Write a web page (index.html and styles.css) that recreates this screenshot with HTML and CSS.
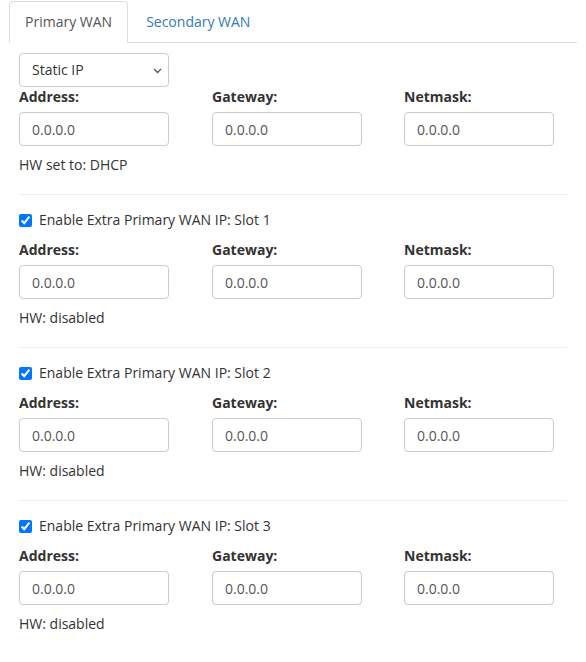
FILE: index.html
```html
<!DOCTYPE html>
<html lang="en">
<head>
  <meta charset="UTF-8">
  <title>WAN settings</title>
  <link rel="stylesheet" href="styles.css">
</head>
<body>
  <!-- Tabs -->
  <ul class="nav-tabs">
    <li class="tab active"><a>Primary WAN</a></li>
    <li class="tab"><a>Secondary WAN</a></li>
  </ul>

  <div class="tab-content">
    <!-- Main address -->
    <div class="section first">
      <div class="select-wrap">
        <select class="form-select">
          <option>Static IP</option>
          <option>DHCP</option>
        </select>
        <svg class="chevron" width="9" height="6" viewBox="0 0 9 6"><path d="M1 1l3.5 3.5 3.5-3.5" fill="none" stroke="#555" stroke-width="1.3"/></svg>
      </div>
      <div class="fields">
        <div class="field"><label>Address:</label><input type="text" class="form-control" value="0.0.0.0"></div>
        <div class="field"><label>Gateway:</label><input type="text" class="form-control" value="0.0.0.0"></div>
        <div class="field"><label>Netmask:</label><input type="text" class="form-control" value="0.0.0.0"></div>
      </div>
      <p class="hw">HW set to: DHCP</p>
    </div>

    <hr>

    <!-- Extra slot 1 -->
    <div class="section">
      <label class="check"><input type="checkbox" checked> Enable Extra Primary WAN IP: Slot 1</label>
      <div class="fields">
        <div class="field"><label>Address:</label><input type="text" class="form-control" value="0.0.0.0"></div>
        <div class="field"><label>Gateway:</label><input type="text" class="form-control" value="0.0.0.0"></div>
        <div class="field"><label>Netmask:</label><input type="text" class="form-control" value="0.0.0.0"></div>
      </div>
      <p class="hw">HW: disabled</p>
    </div>

    <hr>

    <!-- Extra slot 2 -->
    <div class="section">
      <label class="check"><input type="checkbox" checked> Enable Extra Primary WAN IP: Slot 2</label>
      <div class="fields">
        <div class="field"><label>Address:</label><input type="text" class="form-control" value="0.0.0.0"></div>
        <div class="field"><label>Gateway:</label><input type="text" class="form-control" value="0.0.0.0"></div>
        <div class="field"><label>Netmask:</label><input type="text" class="form-control" value="0.0.0.0"></div>
      </div>
      <p class="hw">HW: disabled</p>
    </div>

    <hr>

    <!-- Extra slot 3 -->
    <div class="section">
      <label class="check"><input type="checkbox" checked> Enable Extra Primary WAN IP: Slot 3</label>
      <div class="fields">
        <div class="field"><label>Address:</label><input type="text" class="form-control" value="0.0.0.0"></div>
        <div class="field"><label>Gateway:</label><input type="text" class="form-control" value="0.0.0.0"></div>
        <div class="field"><label>Netmask:</label><input type="text" class="form-control" value="0.0.0.0"></div>
      </div>
      <p class="hw">HW: disabled</p>
    </div>
  </div>
</body>
</html>
```

FILE: styles.css
```css
/* Global */
body, html {
  margin: 0;
  padding: 0;
  font-family: "Open Sans", "Liberation Sans", sans-serif;
  font-size: 14px;
  line-height: 20px;
  color: #333;
  background: #fff;
}

/* Tabs */
.nav-tabs {
  list-style: none;
  display: flex;
  margin: 1px 9px 0 9px;
  padding: 0;
  border-bottom: 1px solid #ddd;
}

.tab {
  margin-right: 2px;
  margin-bottom: -1px;
}

.tab a {
  display: block;
  padding: 10px 15px;
  border: 1px solid transparent;
  border-bottom: none;
  border-radius: 4px 4px 0 0;
  color: #337ab7;
  cursor: pointer;
}

.tab.active a {
  color: #555;
  background: #fff;
  border-color: #ddd;
  padding-bottom: 11px;
}

/* Content */
.tab-content {
  padding: 10px 19px 0 19px;
}

.section {
  padding-top: 15px;
}

.section.first {
  padding-top: 0;
}

.select-wrap {
  position: relative;
  width: 150px;
}

.form-select {
  appearance: none;
  -webkit-appearance: none;
  width: 150px;
  height: 34px;
  padding: 6px 12px;
  border: 1px solid #ccc;
  border-radius: 4px;
  background: #fff;
  font: inherit;
  color: #333;
}

.chevron {
  position: absolute;
  right: 7px;
  top: 15px;
}

.fields {
  display: grid;
  grid-template-columns: 193px 192px 1fr;
}

.section .fields {
  margin-top: 10px;
}

.section.first .fields {
  margin-top: 0;
}

.field label {
  display: block;
  font-weight: 700;
  margin-bottom: 5px;
}

.form-control {
  box-sizing: border-box;
  width: 150px;
  height: 34px;
  padding: 6px 12px;
  border: 1px solid #ccc;
  border-radius: 4px;
  font: inherit;
  color: #555;
}

.hw {
  margin: 9px 0 0 0;
}

.check {
  display: flex;
  align-items: center;
}

.check input {
  width: 13px;
  height: 13px;
  margin: 0 7px 0 0;
}

hr {
  border: 0;
  border-top: 1px solid #eee;
  margin: 19px 0 0 0;
}
```
